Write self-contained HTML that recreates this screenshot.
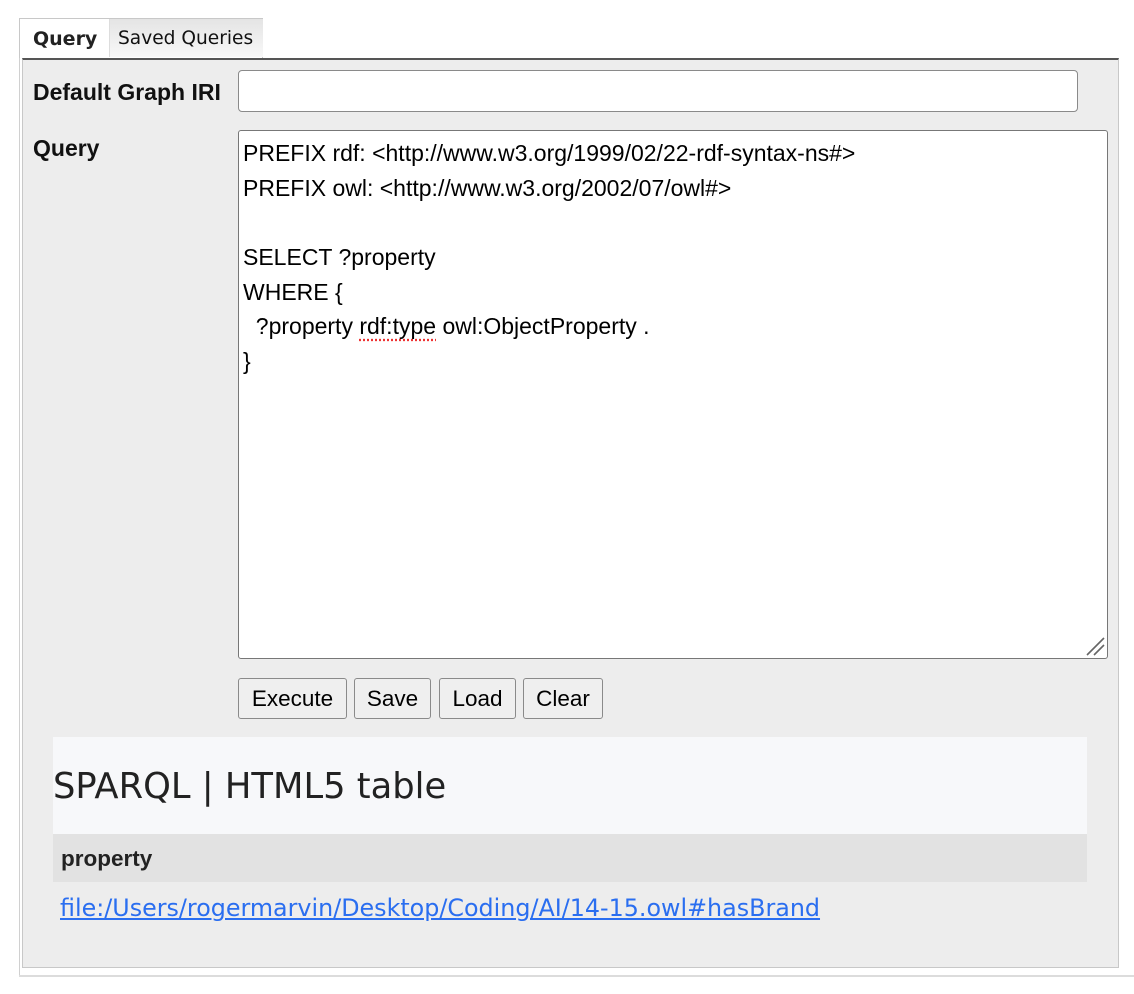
<!DOCTYPE html>
<html><head><style>
body{margin:0;background:#fff;width:1134px;height:994px;position:relative;overflow:hidden;font-family:"Liberation Sans",Arial,sans-serif}
.abs{position:absolute}
.btn{position:absolute;top:678px;height:41px;border:1px solid #8a8a8a;border-radius:3px;background:#efefef;font-size:22.5px;line-height:39px;text-align:center;box-sizing:border-box;color:#000}
.ta div{height:34.7px;line-height:34.7px;white-space:pre}
</style></head><body>
<div class="abs" style="left:19px;top:18px;width:1px;height:958px;background:#d0d0d0"></div>
<div class="abs" style="left:19px;top:975px;width:1115px;height:2px;background:#dcdcdc"></div>
<div class="abs" style="left:19px;top:18px;width:244px;height:40px;border:1px solid #c8c8c8;border-bottom:none;box-sizing:border-box;background:#fff"></div>
<div class="abs" style="left:109px;top:19px;width:153px;height:38px;background:linear-gradient(#e4e4e4,#f8f8f8);border-left:1px solid #ddd"></div>
<div class="abs" style="left:33px;top:28px;font:bold 19px 'DejaVu Sans',sans-serif;color:#222">Query</div>
<div class="abs" style="left:118px;top:28px;font:18.6px 'DejaVu Sans',sans-serif;color:#111">Saved Queries</div>
<div class="abs" style="left:22px;top:58px;width:1097px;height:910px;background:#ededed;border:1px solid #c8c8c8;border-top:2px solid #555;box-sizing:border-box"></div>
<div class="abs" style="left:33px;top:79px;font-weight:bold;font-size:23px;color:#111">Default Graph IRI</div>
<div class="abs" style="left:238px;top:70px;width:840px;height:42px;background:#fff;border:1px solid #8a8a8a;border-radius:4px;box-sizing:border-box"></div>
<div class="abs" style="left:33px;top:135px;font-weight:bold;font-size:23px;color:#111">Query</div>
<div class="abs ta" style="left:238px;top:130px;width:870px;height:529px;background:#fff;border:1px solid #777;border-radius:3px;box-sizing:border-box;padding:5px 0 0 4px;font-size:23px;color:#000">
<div>PREFIX rdf: &lt;http://www.w3.org/1999/02/22-rdf-syntax-ns#&gt;</div>
<div>PREFIX owl: &lt;http://www.w3.org/2002/07/owl#&gt;</div>
<div> </div>
<div>SELECT ?property</div>
<div>WHERE {</div>
<div>  ?property <span style="text-decoration:underline dotted #e33;text-underline-offset:5px">rdf:type</span> owl:ObjectProperty .</div>
<div>}</div>
<svg style="position:absolute;right:2px;bottom:2px" width="20" height="20"><path d="M2 19L19 2M9 19L19 9" stroke="#666" stroke-width="1.6"/></svg>
</div>
<div class="btn" style="left:238px;width:109px">Execute</div>
<div class="btn" style="left:354px;width:77px">Save</div>
<div class="btn" style="left:439px;width:77px">Load</div>
<div class="btn" style="left:523px;width:80px">Clear</div>
<div class="abs" style="left:53px;top:737px;width:1034px;height:97px;background:#f7f8fa"></div>
<div class="abs" style="left:53px;top:766px;font:35.3px 'DejaVu Sans',sans-serif;color:#222">SPARQL | HTML5 table</div>
<div class="abs" style="left:53px;top:834px;width:1034px;height:48px;background:#e2e2e2"></div>
<div class="abs" style="left:61px;top:846px;font-weight:bold;font-size:22.5px;color:#222">property</div>
<a class="abs" style="left:60px;top:894px;font:23.8px 'DejaVu Sans',sans-serif;color:#2a6ef0;text-decoration:underline">file:/Users/rogermarvin/Desktop/Coding/AI/14-15.owl#hasBrand</a>
</body></html>
